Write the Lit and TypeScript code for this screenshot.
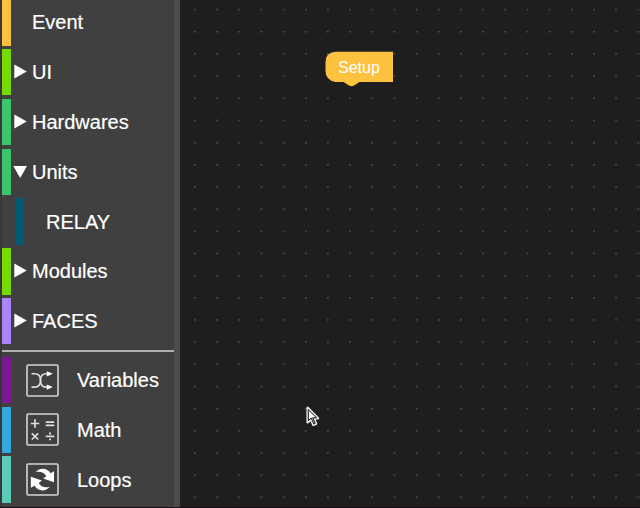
import { LitElement, html, svg, css, nothing } from "lit";
import { customElement } from "lit/decorators.js";

type IconName = "shuffle" | "math" | "loop";

interface Category {
  label: string;
  tone: string;
  arrow?: "closed" | "open";
  nested?: boolean;
  icon?: IconName;
}

const groups: Category[] = [
  { label: "Event", tone: "event" },
  { label: "UI", tone: "lime", arrow: "closed" },
  { label: "Hardwares", tone: "green", arrow: "closed" },
  { label: "Units", tone: "green", arrow: "open" },
  { label: "RELAY", tone: "relay", nested: true },
  { label: "Modules", tone: "lime", arrow: "closed" },
  { label: "FACES", tone: "faces", arrow: "closed" },
];

const blocks: Category[] = [
  { label: "Variables", tone: "variables", icon: "shuffle" },
  { label: "Math", tone: "math", icon: "math" },
  { label: "Loops", tone: "loops", icon: "loop" },
];

const glyphs = {
  shuffle: svg`
    <g fill="none" stroke="#e0e0e0" stroke-width="1.6">
      <path d="M5.500 9.800h3c3.500 0 6 2 6 6.500s2.400 6.800 5.500 6.800h3"/>
      <path d="M5.500 23.100h3c3.500 0 6-2.300 6-6.800S16.900 9.800 20 9.800h3"/>
    </g>
    <path fill="#fff" d="M20.800 7.200l6 2.600-6 2.600zM20.800 20.500l6 2.600-6 2.600z"/>`,
  math: svg`
    <g fill="none" stroke="#dedede" stroke-width="1.7">
      <path d="M4.800 10.500h8.400M9 6.300v8.400M19.800 9.100h8.400M19.800 12.300h8.400M5.800 20.300l6.400 6.200M12.200 20.300l-6.400 6.200M19.800 23.400h8.400"/>
    </g>
    <path fill="#dedede" d="M23.100 19.500h1.900v1.900h-1.900zM23.100 25.400h1.900v1.900h-1.900z"/>`,
  loop: svg`
    <path fill="#fff" d="M9.400 9.200C14 4.200 21.200 4.600 24.600 10.200L28 8.200V19.200L17.200 15.500 20.300 13.200C18.400 9.800 14.400 8 9.400 9.200Z"/>
    <path fill="#fff" d="M24 23.800C19.400 28.900 12.200 28.600 8.600 22.800L4.800 24.800V13.700L15.900 17.600 12.700 19.900C14.600 23.600 18.800 25.200 24 23.800Z"/>`,
};

const pointer = "M1.700 2V16.200L5 13.200 7.400 18.800 10 17.700 7.700 12.300H12Z";

@customElement("app-root")
export class AppRoot extends LitElement {
  static styles = css`
    :host {
      position: relative;
      display: flex;
      box-sizing: border-box;
      width: 640px;
      height: 508px;
      overflow: hidden;
      background: #1e1e1e;
      border-bottom: 1.500px solid #150f18;
      font: 20px "Liberation Sans", Arial, sans-serif;
      color: #fff;
    }
    .toolbox {
      flex: none;
      box-sizing: border-box;
      width: 180px;
      background: #404040;
      border-left: 2px solid #383838;
      border-right: 6px solid #4c4c4c;
      overflow: hidden;
    }
    .list {
      margin-top: -0.9px;
    }
    .row {
      display: flex;
      align-items: center;
      height: 46.5px;
      margin-bottom: 3.300px;
      white-space: nowrap;
    }
    .stripe {
      flex: none;
      width: 9px;
      height: 100%;
    }
    .nested { padding-left: 13px; }
    .event { background: #ffc23e; }
    .lime { background: #76d900; }
    .green { background: #3bc66c; }
    .relay { background: #035a72; }
    .faces { background: #aa83ff; }
    .variables { background: #7b1993; }
    .math { background: #32aae1; }
    .loops { background: #5bccb9; }
    .marker {
      flex: none;
      width: 21px;
      height: 20px;
    }
    .nested .marker { width: 22px; }
    .marker svg, .icon, .cursor { display: block; }
    .icon {
      flex: none;
      width: 33px;
      height: 33px;
      margin: 0 18px 0 15px;
    }
    .separator {
      height: 2px;
      margin: 5.600px 0 4.900px;
      background: #b0b0b0;
    }
    .label {
      line-height: 24px;
      -webkit-text-stroke: 0.2px #fff;
    }
    .workspace {
      position: relative;
      flex: 1;
    }
    .dots {
      display: block;
      width: 100%;
      height: 100%;
    }
    .setup {
      position: absolute;
      left: 145px;
      top: 51px;
      width: 69px;
      height: 36px;
    }
    .setup svg {
      position: absolute;
      inset: 0;
    }
    .setup span {
      position: absolute;
      left: 13px;
      top: 7px;
      font-size: 16px;
      line-height: 20px;
    }
    .cursor {
      position: absolute;
      left: 126px;
      top: 406px;
    }
  `;

  private marker(arrow?: "closed" | "open") {
    return html`<span class="marker">${arrow
      ? html`<svg width="20" height="20" viewBox="0 0 20 20">
          <path fill="#fff" d=${arrow === "closed" ? "M3.300 2.600L15.800 9.500 3.300 16.400z" : "M2.300 4H16L9.200 16z"} />
        </svg>`
      : nothing}</span>`;
  }

  private row(c: Category) {
    return html`<div class="row ${c.nested ? "nested" : ""}">
      <span class="stripe ${c.tone}"></span>
      ${c.icon
        ? html`<svg class="icon" viewBox="0 0 33 33">
            <rect x="1" y="1" width="31" height="31" rx="1.200" fill="none" stroke="#d4d4d4" stroke-width="1.600" />
            ${glyphs[c.icon]}
          </svg>`
        : this.marker(c.arrow)}
      <span class="label">${c.label}</span>
    </div>`;
  }

  render() {
    return html`
      <nav class="toolbox">
        <div class="list">
          ${groups.map((c) => this.row(c))}
          <div class="separator"></div>
          ${blocks.map((c) => this.row(c))}
        </div>
      </nav>
      <main class="workspace">
        <svg class="dots">
          <defs>
            <pattern id="grid" x="14" y="8.800" width="22.170" height="22.170" patternUnits="userSpaceOnUse">
              <rect width="1.700" height="1.500" fill="#525252" />
            </pattern>
          </defs>
          <rect width="100%" height="100%" fill="url(#grid)" />
        </svg>
        <div class="setup">
          <svg width="69" height="36" viewBox="0 0 69 36">
            <path fill="#ffc23e" d="M10.500 0.800H68V31H34.500L29 34.600Q26.500 35.800 24 34.600L18.500 31H10.500Q0.500 29 0.500 20V11.500Q0.500 1.500 10.500 0.800Z" />
          </svg>
          <span>Setup</span>
        </div>
        <svg class="cursor" width="15" height="22" viewBox="0 0 15 22">
          <path fill="none" stroke="#e4e4e4" stroke-width="2.600" stroke-linejoin="round" d=${pointer} />
          <path fill="#fff" stroke="#111" stroke-width="1" d="M2.300 3.600V14.700L5.200 12 7.900 18 9.100 17.400 6.700 11.800H10.500Z" />
        </svg>
      </main>
    `;
  }
}
